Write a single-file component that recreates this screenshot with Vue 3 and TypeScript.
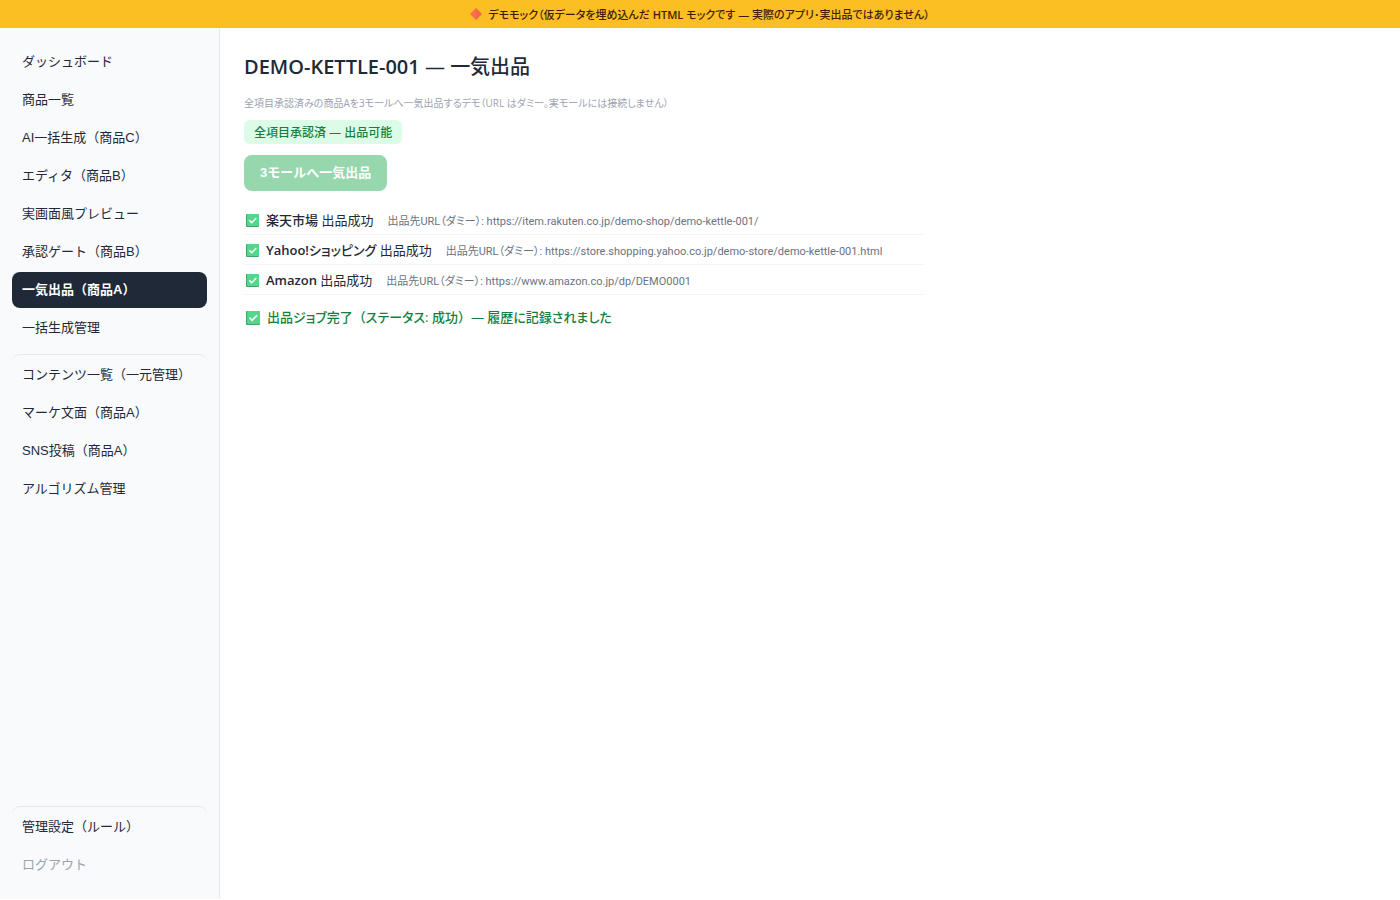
<script setup lang="ts">
import { ref } from 'vue'

interface NavItem {
  id: string
  label: string
  divided?: boolean
}

interface Listing {
  latin: string
  japanese: string
  url: string
}

const navItems: NavItem[] = [
  { id: 'dashboard', label: 'ダッシュボード' },
  { id: 'products', label: '商品一覧' },
  { id: 'generate', label: 'AI一括生成（商品C）' },
  { id: 'editor', label: 'エディタ（商品B）' },
  { id: 'preview', label: '実画面風プレビュー' },
  { id: 'approval', label: '承認ゲート（商品B）' },
  { id: 'publish', label: '一気出品（商品A）' },
  { id: 'batch', label: '一括生成管理' },
  { id: 'contents', label: 'コンテンツ一覧（一元管理）', divided: true },
  { id: 'marketing', label: 'マーケ文面（商品A）' },
  { id: 'sns', label: 'SNS投稿（商品A）' },
  { id: 'algorithm', label: 'アルゴリズム管理' },
]

const listings: Listing[] = [
  { latin: '', japanese: '楽天市場', url: 'https://item.rakuten.co.jp/demo-shop/demo-kettle-001/' },
  { latin: 'Yahoo!', japanese: 'ショッピング', url: 'https://store.shopping.yahoo.co.jp/demo-store/demo-kettle-001.html' },
  { latin: 'Amazon', japanese: '', url: 'https://www.amazon.co.jp/dp/DEMO0001' },
]

const active = ref('publish')
</script>

<template>
  <div class="page">
    <div class="banner">
      <svg class="diamond" viewBox="0 0 12 12" aria-hidden="true">
        <path d="M6 0 12 6 6 12 0 6Z" fill="#f8704c" />
        <path d="M6 0 12 6 6 12Z" fill="#ee5a4c" opacity=".4" />
      </svg>
      <span>デモモック（仮データを埋め込んだ <span class="latin">HTML</span> モックです — 実際のアプリ･実出品ではありません）</span>
    </div>
    <div class="body">
      <nav class="sidebar">
        <button
          v-for="item in navItems"
          :key="item.id"
          type="button"
          class="nav-item"
          :class="{ active: active === item.id, divided: item.divided }"
          @click="active = item.id"
        >{{ item.label }}</button>
        <div class="spacer"></div>
        <button type="button" class="nav-item divided" :class="{ active: active === 'settings' }" @click="active = 'settings'">管理設定（ルール）</button>
        <button type="button" class="nav-item muted">ログアウト</button>
      </nav>
      <main class="main">
        <h1><span class="latin">DEMO-KETTLE-001</span> — 一気出品</h1>
        <p class="lead">全項目承認済みの商品Aを3モールへ一気出品するデモ（URL はダミー。実モールには接続しません）</p>
        <span class="badge">全項目承認済 — 出品可能</span>
        <button type="button" class="publish" disabled>3モールへ一気出品</button>
        <ul class="results">
          <li v-for="row in listings" :key="row.url">
            <svg class="check" viewBox="0 0 13 13" aria-hidden="true">
              <rect width="13" height="13" rx="1" fill="#3fa56d" />
              <rect x="1" width="12" height="12" rx="1" fill="#55d68c" />
              <path d="M3.3 6.3 5.7 8.7 10.3 4" fill="none" stroke="#fff" stroke-width="1.4" />
            </svg>
            <span><b><span class="latin">{{ row.latin }}</span>{{ row.japanese }}</b> 出品成功</span>
            <span class="url">出品先URL（ダミー）: {{ row.url }}</span>
          </li>
        </ul>
        <p class="done">
          <svg class="check" viewBox="0 0 13 13" aria-hidden="true">
            <rect width="13" height="13" rx="1" fill="#3fa56d" />
            <rect x="1" width="12" height="12" rx="1" fill="#55d68c" />
            <path d="M3.3 6.3 5.7 8.7 10.3 4" fill="none" stroke="#fff" stroke-width="1.4" />
          </svg>
          <span>出品ジョブ完了<span class="wide">（</span>ステータス: 成功<span class="wide">）</span>— 履歴に記録されました</span>
        </p>
      </main>
    </div>
  </div>
</template>

<style>
body {
  margin: 0;
  background: #fff;
}
</style>

<style scoped>
.page {
  min-height: calc(100vh - 1px);
  display: flex;
  flex-direction: column;
  color: #1f2937;
  font-family: "Open Sans", "Noto Sans CJK JP", sans-serif;
  font-size: 13px;
  font-feature-settings: "palt";
}
.wide {
  font-feature-settings: normal;
}
.latin {
  font-weight: 600;
}
.banner {
  display: flex;
  align-items: center;
  justify-content: center;
  gap: 6px;
  height: 28px;
  background: #fbbf24;
  color: #451a03;
  font-size: 11px;
  font-weight: 500;
}
.diamond {
  width: 12px;
  height: 12px;
}
.body {
  flex: 1;
  display: flex;
}
.sidebar {
  box-sizing: border-box;
  width: 220px;
  flex: none;
  display: flex;
  flex-direction: column;
  gap: 2px;
  padding: 16px 12px;
  background: #f9fafb;
  border-right: 1px solid #e5e7eb;
}
.nav-item {
  padding: 9px 10px;
  border: 0;
  border-radius: 8px;
  background: transparent;
  color: #1f2937;
  font-family: "Liberation Sans", "Noto Sans CJK JP", sans-serif;
  font-size: 13px;
  line-height: 18px;
  text-align: left;
  font-feature-settings: normal;
  cursor: pointer;
}
.nav-item.active {
  background: #1f2937;
  color: #fff;
  font-weight: 700;
}
.nav-item.divided {
  margin-top: 6px;
  padding-top: 11px;
  border-top: 1px solid #e5e7eb;
}
.nav-item.muted {
  color: #9ca3af;
}
.spacer {
  flex: 1;
}
.main {
  flex: 1;
  padding: 24px;
}
h1 {
  margin: 0 0 12px;
  font-size: 20px;
  line-height: 30px;
  font-weight: 500;
}
.lead {
  margin: 0 0 8px;
  color: #9ca3af;
  font-size: 10px;
  line-height: 18px;
}
.badge {
  display: block;
  width: fit-content;
  padding: 3px 10px 1px;
  border-radius: 6px;
  background: #dcfce7;
  color: #15803d;
  font-size: 12px;
  line-height: 20px;
  font-weight: 500;
}
.publish {
  display: block;
  margin: 11px 0 14px;
  padding: 9px 16px;
  border: 0;
  border-radius: 8px;
  background: #96d7ae;
  color: #fff;
  font-family: "Liberation Sans", "Noto Sans CJK JP", sans-serif;
  font-size: 13px;
  line-height: 18px;
  font-weight: 700;
}
.results {
  max-width: 680px;
  margin: 0;
  padding: 0;
  list-style: none;
}
.results li {
  display: flex;
  align-items: center;
  height: 29px;
  border-bottom: 1px solid #f3f4f6;
}
.results b {
  font-weight: 500;
}
.check {
  flex: none;
  width: 13px;
  height: 13px;
  margin: 1px 7px 0 2px;
}
.url {
  margin-left: 14px;
  color: #6b7280;
  font-family: Roboto, "Noto Sans CJK JP", sans-serif;
  font-size: 11px;
}
.done {
  display: flex;
  align-items: center;
  margin: 12px 0 0;
  color: #15803d;
  font-size: 13px;
  line-height: 20px;
  font-weight: 500;
}
.done .check {
  width: 14px;
  height: 14px;
}
</style>
